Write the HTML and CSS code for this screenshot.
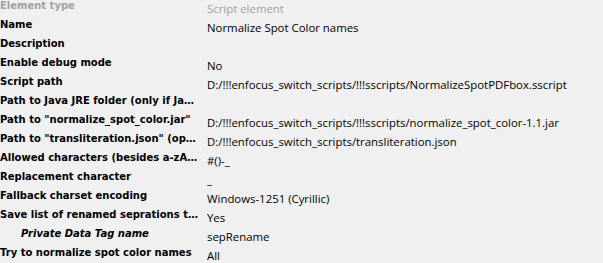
FILE: index.html
```html
<!DOCTYPE html>
<html>
<head>
<meta charset="utf-8">
<link rel="stylesheet" href="styles.css">
</head>
<body>
<div class="props">
  <div class="row disabled"><div class="label">Element type</div><div class="value">Script element</div></div>
  <div class="row"><div class="label">Name</div><div class="value">Normalize Spot Color names</div></div>
  <div class="row"><div class="label">Description</div><div class="value"></div></div>
  <div class="row"><div class="label">Enable debug mode</div><div class="value">No</div></div>
  <div class="row"><div class="label">Script path</div><div class="value">D:/!!!enfocus_switch_scripts/!!!sscripts/NormalizeSpotPDFbox.sscript</div></div>
  <div class="row"><div class="label">Path to Java JRE folder (only if Java is not in PATH)</div><div class="value"></div></div>
  <div class="row"><div class="label">Path to "normalize_spot_color.jar"</div><div class="value">D:/!!!enfocus_switch_scripts/!!!sscripts/normalize_spot_color-1.1.jar</div></div>
  <div class="row"><div class="label">Path to "transliteration.json" (optional)</div><div class="value">D:/!!!enfocus_switch_scripts/transliteration.json</div></div>
  <div class="row"><div class="label">Allowed characters (besides a-zA-Z0-9)</div><div class="value">#()-_</div></div>
  <div class="row"><div class="label">Replacement character</div><div class="value">_</div></div>
  <div class="row"><div class="label">Fallback charset encoding</div><div class="value">Windows-1251 (Cyrillic)</div></div>
  <div class="row"><div class="label">Save list of renamed seprations to Private Data</div><div class="value">Yes</div></div>
  <div class="row sub"><div class="label">Private Data Tag name</div><div class="value">sepRename</div></div>
  <div class="row"><div class="label">Try to normalize spot color names</div><div class="value">All</div></div>
</div>
</body>
</html>
```
FILE: styles.css
```css
html, body {
  margin: 0;
  padding: 0;
  background: #f0f0f0;
}
.props {
  display: flex;
  flex-direction: column;
}
.row {
  display: grid;
  grid-template-columns: 207px 1fr;
  height: 19px;
  color: #000;
}
.label {
  font-family: "DejaVu Sans", sans-serif;
  font-weight: bold;
  font-size: 10px;
  line-height: 12px;
  white-space: nowrap;
  overflow: hidden;
  text-overflow: ellipsis;
  width: 200px;
  box-sizing: border-box;
}
.value {
  font-family: "Open Sans", sans-serif;
  font-size: 11.4px;
  line-height: 16px;
  padding-top: 1px;
  white-space: nowrap;
  overflow: hidden;
}
.disabled .label,
.disabled .value {
  color: #a0a0a0;
}
.sub .label {
  font-style: italic;
  padding-left: 21px;
}
```
